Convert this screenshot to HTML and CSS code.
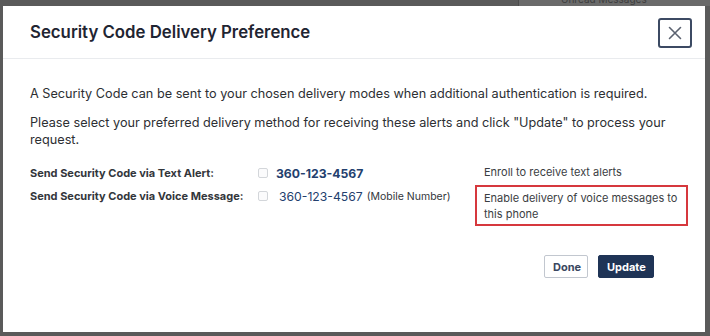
FILE: index.html
```html
<!DOCTYPE html>
<html lang="en">
<head>
<meta charset="utf-8">
<title>Security Code Delivery Preference</title>
<link rel="stylesheet" href="styles.css">
</head>
<body>
<div class="backdrop-peek">
  <span class="peek-text">Unread Messages</span>
</div>
<div class="modal">
  <div class="modal-header">
    <h2 class="modal-title">Security Code Delivery Preference</h2>
    <button class="close-btn" aria-label="Close">
      <svg width="14" height="14" viewBox="0 0 14 14"><path d="M1.5 1.5 L12.5 12.5 M12.5 1.5 L1.5 12.5" stroke="#5b6270" stroke-width="1.6" stroke-linecap="round" fill="none"/></svg>
    </button>
  </div>
  <div class="modal-body">
    <p class="intro">A Security Code can be sent to your chosen delivery modes when additional authentication is required.</p>
    <p class="intro">Please select your preferred delivery method for receiving these alerts and click "Update" to process your request.</p>
    <div class="options">
      <div class="opt-label">Send Security Code via Text Alert:</div>
      <div class="opt-value"><span class="check"></span><span class="phone bold">360-123-4567</span></div>
      <div class="opt-note">Enroll to receive text alerts</div>

      <div class="opt-label">Send Security Code via Voice Message:</div>
      <div class="opt-value"><span class="check"></span><span class="phone regular">360-123-4567</span><span class="mobile">(Mobile Number)</span></div>
      <div class="opt-note highlight">Enable delivery of voice messages to this phone</div>
    </div>
    <div class="actions">
      <button class="btn btn-outline">Done</button>
      <button class="btn btn-primary">Update</button>
    </div>
  </div>
</div>
</body>
</html>
```

FILE: styles.css
```css
* { box-sizing: border-box; }
html, body { margin: 0; padding: 0; }
body {
  width: 710px;
  height: 336px;
  background: #5a5a5a;
  font-family: Inter, "Noto Sans", "Liberation Sans", sans-serif;
  overflow: hidden;
  position: relative;
}
.backdrop-peek {
  position: absolute;
  left: 518px;
  top: 0;
  width: 192px;
  height: 6px;
  background: #6a6a6a;
  border-left: 1px solid #4c4c4c;
  overflow: hidden;
}
.peek-text {
  position: absolute;
  left: 42px;
  top: -6px;
  font-size: 10px;
  line-height: 10px;
  color: #3d3d3d;
}
.modal {
  position: relative;
  margin: 6px 0 0 3px;
  width: 702px;
  height: 326px;
  background: #ffffff;
  display: flex;
  flex-direction: column;
}
.modal-header {
  height: 53px;
  border-bottom: 1px solid #e9ebee;
  display: flex;
  align-items: center;
  justify-content: space-between;
  padding: 0 13px 0 27px;
}
.modal-title {
  margin: 0;
  font-size: 16.8px;
  font-weight: 600;
  color: #1f2532;
}
.close-btn {
  width: 34px;
  height: 30px;
  margin-top: 1px;
  border: 2px solid #3c4a63;
  border-radius: 3px;
  background: #fff;
  display: flex;
  align-items: center;
  justify-content: center;
  padding: 0;
}
.modal-body {
  padding: 26px 17px 0 27px;
}
.intro {
  margin: 0 0 12px;
  font-size: 12.7px;
  line-height: 17px;
  color: #2d2f33;
}
.options {
  display: grid;
  grid-template-columns: 228px 217px 213px;
  align-items: start;
  row-gap: 1px;
  margin-top: 14px;
}
.opt-label {
  font-size: 11px;
  font-weight: 700;
  color: #33363b;
  line-height: 16px;
  padding-top: 3px;
}
.opt-value {
  display: flex;
  align-items: center;
  height: 22px;
}
.check {
  width: 10px;
  height: 10px;
  border: 1px solid #d3d6da;
  border-radius: 2px;
  background: #fbfbfc;
  margin-right: 8px;
  flex: none;
}
.phone {
  font-size: 12.2px;
  color: #23406e;
}
.phone.bold { font-weight: 700; }
.phone.regular { margin-left: 3px; }
.mobile {
  font-size: 10.5px;
  color: #33363b;
  margin-left: 4px;
}
.opt-note {
  font-size: 11px;
  line-height: 16px;
  color: #3a3d42;
  padding: 2px 9px 3px 9px;
}
.opt-note.highlight {
  border: 2px solid #d6383d;
  padding: 3px 8px 2px 7px;
}
.actions {
  display: flex;
  justify-content: flex-end;
  gap: 10px;
  margin-top: 29px;
  padding-right: 34px;
}
.btn {
  height: 23px;
  font-family: inherit;
  font-size: 11px;
  font-weight: 700;
  border-radius: 2px;
  padding: 0 8px;
}
.btn-outline {
  width: 44px;
  background: #fff;
  color: #3a4760;
  border: 1px solid #c2c7cf;
}
.btn-primary {
  width: 56px;
  background: #1f3456;
  color: #fff;
  border: 1px solid #1f3456;
}
```
